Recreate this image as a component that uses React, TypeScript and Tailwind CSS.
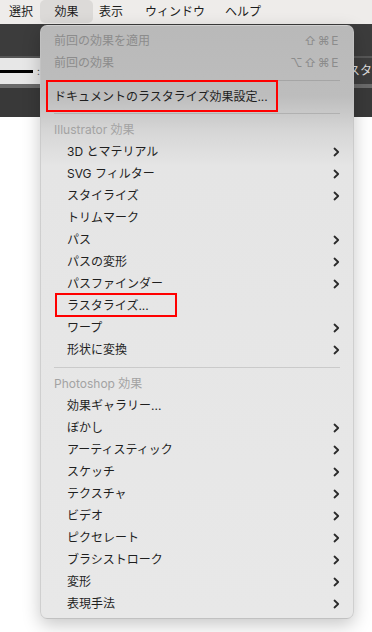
import React from "react";

type Item =
  | { kind: "row"; label: string; indent?: boolean; disabled?: boolean; shortcut?: string; sub?: boolean }
  | { kind: "header"; label: string }
  | { kind: "sep"; h: string };

const items: Item[] = [
  { kind: "row", label: "前回の効果を適用", disabled: true, shortcut: "⇧⌘E" },
  { kind: "row", label: "前回の効果", disabled: true, shortcut: "⌥⇧⌘E" },
  { kind: "sep", h: "h-[12px]" },
  { kind: "row", label: "ドキュメントのラスタライズ効果設定..." },
  { kind: "sep", h: "h-[11px]" },
  { kind: "header", label: "Illustrator 効果" },
  { kind: "row", label: "3D とマテリアル", indent: true, sub: true },
  { kind: "row", label: "SVG フィルター", indent: true, sub: true },
  { kind: "row", label: "スタイライズ", indent: true, sub: true },
  { kind: "row", label: "トリムマーク", indent: true },
  { kind: "row", label: "パス", indent: true, sub: true },
  { kind: "row", label: "パスの変形", indent: true, sub: true },
  { kind: "row", label: "パスファインダー", indent: true, sub: true },
  { kind: "row", label: "ラスタライズ...", indent: true },
  { kind: "row", label: "ワープ", indent: true, sub: true },
  { kind: "row", label: "形状に変換", indent: true, sub: true },
  { kind: "sep", h: "h-[12px]" },
  { kind: "header", label: "Photoshop 効果" },
  { kind: "row", label: "効果ギャラリー...", indent: true },
  { kind: "row", label: "ぼかし", indent: true, sub: true },
  { kind: "row", label: "アーティスティック", indent: true, sub: true },
  { kind: "row", label: "スケッチ", indent: true, sub: true },
  { kind: "row", label: "テクスチャ", indent: true, sub: true },
  { kind: "row", label: "ビデオ", indent: true, sub: true },
  { kind: "row", label: "ピクセレート", indent: true, sub: true },
  { kind: "row", label: "ブラシストローク", indent: true, sub: true },
  { kind: "row", label: "変形", indent: true, sub: true },
  { kind: "row", label: "表現手法", indent: true, sub: true },
];

function Chevron() {
  return (
    <svg width="7" height="10" viewBox="0 0 7 10" className="text-[#2a2a2a]">
      <path d="M1.5 1.5 L5.2 5 L1.5 8.5" fill="none" stroke="currentColor" strokeWidth={1.8} strokeLinecap="round" strokeLinejoin="round" />
    </svg>
  );
}

export default function App() {
  return (
    <div
      className="relative w-[372px] h-[632px] overflow-hidden bg-white text-[12px]"
      style={{ fontFamily: 'Inter, "Noto Sans CJK JP", sans-serif' }}
    >
      {/* Menu bar */}
      <div className="flex h-6 items-center bg-[#eeecea] pl-[9px] text-[#1c1c1c]">
        <span>選択</span>
        <span className="ml-[7px] flex h-[23px] w-[53px] items-center justify-center self-start rounded-[5px] bg-[#dcdad8]">効果</span>
        <span className="ml-[6px]">表示</span>
        <span className="ml-[22px]">ウィンドウ</span>
        <span className="ml-[20px]">ヘルプ</span>
      </div>

      {/* App chrome behind the menu */}
      <div className="h-[34px] bg-[#3c3c3c] border-b-2 border-[#565656]" />
      <div className="flex h-[26px]">
        <div className="flex w-[60px] items-center bg-[#e7e7e7]">
          <div className="h-[3px] w-[33px] bg-black" />
          <span className="ml-[4px] text-[10px] leading-none text-[#444]">:</span>
        </div>
        <div className="flex flex-1 items-center justify-end overflow-hidden bg-[#3d3d3d] text-[12px] text-[#dcdcdc]">
          <span className="whitespace-nowrap">スタ</span>
        </div>
      </div>
      <div className="h-[4px] bg-[#6a6a6a]" />
      <div className="h-[29px] bg-[#393939]" />

      {/* Effect menu */}
      <div className="absolute left-[40px] top-[25px] w-[314px] rounded-[7px] border border-[#c4c4c4]/70 bg-[linear-gradient(to_bottom,#b9b9b9_0px,#bdbdbd_70px,#d6d6d6_105px,#e5e5e5_140px,#e8e8e8_100%)] pt-[4px] pb-[3px] shadow-[0_6px_18px_rgba(0,0,0,0.22)]">
        {items.map((it, i) => {
          if (it.kind === "sep") {
            return (
              <div key={i} className={`${it.h} flex items-center px-[13px]`}>
                <div className="h-px w-full bg-[#0000001f]" />
              </div>
            );
          }
          if (it.kind === "header") {
            return (
              <div key={i} className="flex h-[22px] items-center pl-[13px] text-[#a3a3a3]">
                {it.label}
              </div>
            );
          }
          return (
            <div
              key={i}
              className={`flex h-[22px] items-center pr-[13px] ${it.indent ? "pl-[26px]" : "pl-[13px]"} ${it.disabled ? "text-[#8c8c8c]" : "text-[#1f1f1f]"}`}
            >
              <span className="flex-1">{it.label}</span>
              {it.shortcut && <span className="tracking-[1.5px] text-[#8c8c8c]">{it.shortcut}</span>}
              {it.sub && <Chevron />}
            </div>
          );
        })}
      </div>

      {/* Red annotation boxes */}
      <div className="pointer-events-none absolute left-[46px] top-[80px] h-[32px] w-[232px] border-2 border-[#ff0000]" />
      <div className="pointer-events-none absolute left-[55px] top-[293px] h-[24px] w-[122px] border-2 border-[#ff0000]" />
    </div>
  );
}
